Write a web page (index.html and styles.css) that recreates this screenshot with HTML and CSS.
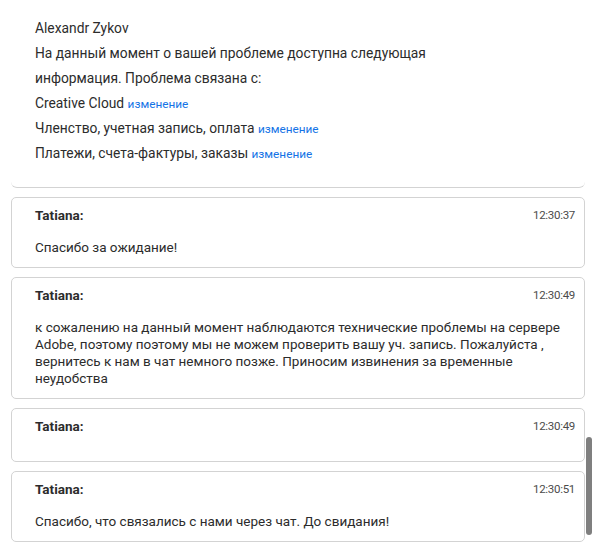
FILE: index.html
```html
<!DOCTYPE html>
<html lang="ru">
<head>
<meta charset="utf-8">
<title>Chat</title>
<link rel="stylesheet" href="styles.css">
</head>
<body>
<div class="chat">
  <div class="card card-top">
    <div class="line">Alexandr Zykov</div>
    <div class="line">На данный момент о вашей проблеме доступна следующая<br>информация. Проблема связана с:</div>
    <div class="line">Creative Cloud <a class="change">изменение</a></div>
    <div class="line">Членство, учетная запись, оплата <a class="change">изменение</a></div>
    <div class="line">Платежи, счета-фактуры, заказы <a class="change">изменение</a></div>
  </div>

  <div class="card">
    <div class="head"><span class="name">Tatiana:</span><span class="time">12:30:37</span></div>
    <div class="msg">Спасибо за ожидание!</div>
  </div>

  <div class="card">
    <div class="head"><span class="name">Tatiana:</span><span class="time">12:30:49</span></div>
    <div class="msg">к сожалению на данный момент наблюдаются технические проблемы на сервере<br>Adobe, поэтому поэтому мы не можем проверить вашу уч. запись. Пожалуйста ,<br>вернитесь к нам в чат немного позже. Приносим извинения за временные<br>неудобства</div>
  </div>

  <div class="card">
    <div class="head"><span class="name">Tatiana:</span><span class="time">12:30:49</span></div>
    <div class="msg"></div>
  </div>

  <div class="card">
    <div class="head"><span class="name">Tatiana:</span><span class="time">12:30:51</span></div>
    <div class="msg">Спасибо, что связались с нами через чат. До свидания!</div>
  </div>

  <div class="scroll-thumb"></div>
</div>
</body>
</html>
```

FILE: styles.css
```css
html, body {
  margin: 0;
  padding: 0;
  background: #ffffff;
}

body {
  font-family: "Roboto", "Open Sans", sans-serif;
  color: #2c2c2c;
  width: 600px;
  height: 543px;
  overflow: hidden;
}

.chat {
  position: relative;
  display: flex;
  flex-direction: column;
  gap: 9px;
  padding-left: 11px;
  width: 574px;
  height: 543px;
}

.card {
  box-sizing: border-box;
  width: 574px;
  background: #ffffff;
  border: 1px solid #d3d3d3;
  border-radius: 5px;
  padding: 8px 9px 11px 23px;
}

.card-top {
  border-top: none;
  border-left: none;
  border-right: none;
  border-radius: 0 0 6px 6px;
  padding: 16px 24px 21px 24px;
}

.card-top .line {
  font-size: 13.8px;
  line-height: 25px;
}

.change {
  color: #1473e6;
  font-size: 11.8px;
  line-height: 1;
  text-decoration: none;
}

.head {
  display: flex;
  justify-content: space-between;
  align-items: center;
  height: 18px;
}

.name {
  font-weight: 700;
  font-size: 13.5px;
}

.time {
  font-size: 11.5px;
  color: #4b4b4b;
  letter-spacing: -0.3px;
}

.msg {
  margin-top: 15px;
  font-size: 13.5px;
  line-height: 17px;
}

.scroll-thumb {
  position: absolute;
  left: 586px;
  top: 437px;
  width: 6px;
  height: 98px;
  border-radius: 3px;
  background: #7f7f7f;
}
```
